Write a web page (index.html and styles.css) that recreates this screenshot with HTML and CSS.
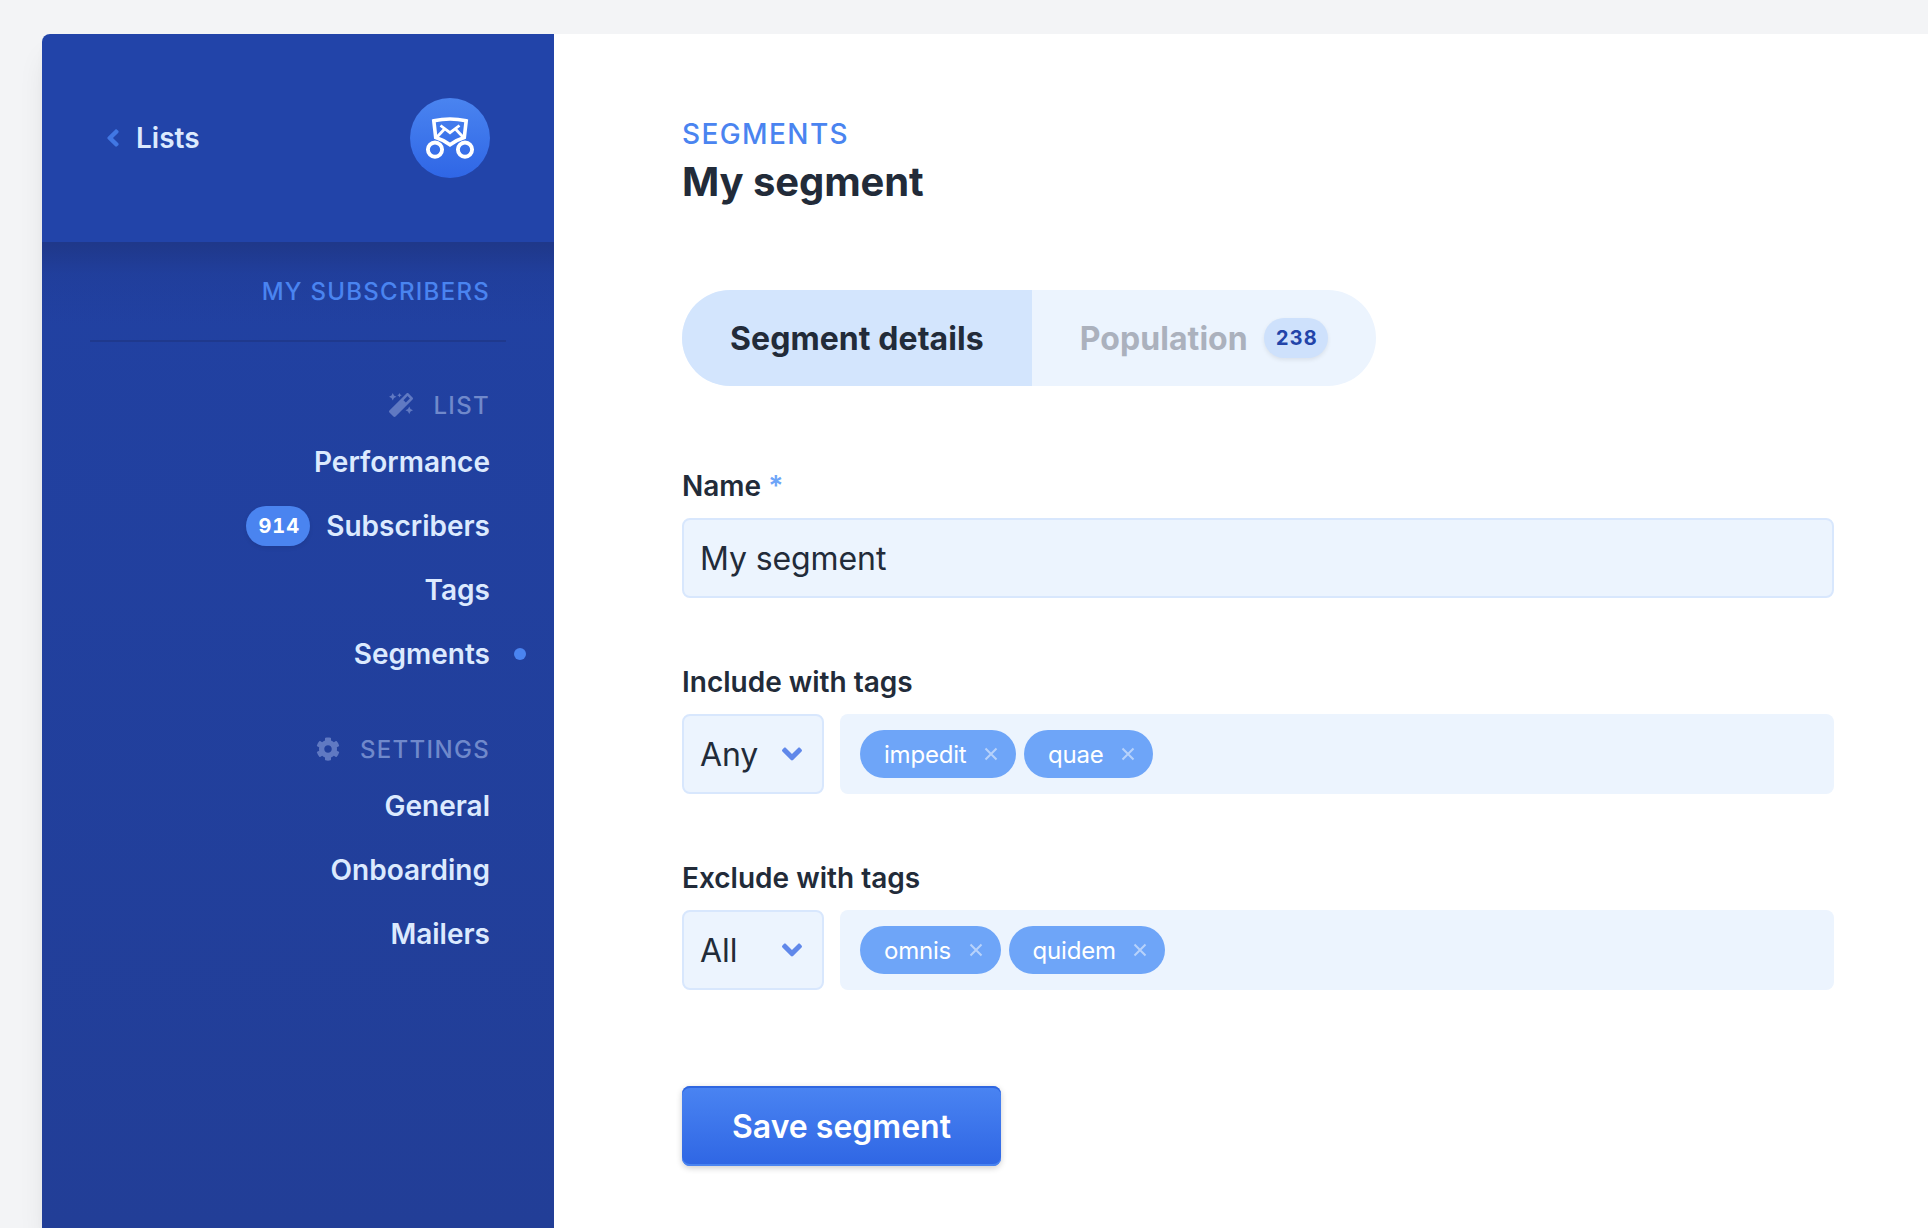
FILE: index.html
```html
<!DOCTYPE html>
<html lang="en">
<head>
<meta charset="utf-8">
<title>My segment</title>
<link rel="stylesheet" href="styles.css">
</head>
<body>
<div class="card">
  <aside class="sidebar">
    <header class="sidebar-header">
      <a class="back">
        <svg class="back-icon" viewBox="0 0 256 512"><path d="M31.7 239l136-136c9.4-9.4 24.6-9.4 33.9 0l22.6 22.6c9.4 9.4 9.4 24.6 0 33.9L127.9 256l96.4 96.4c9.4 9.4 9.4 24.6 0 33.9L201.7 409c-9.4 9.4-24.6 9.4-33.9 0l-136-136c-9.5-9.4-9.5-24.6-.1-34z"/></svg>
        <span>Lists</span>
      </a>
      <div class="logo">
        <svg viewBox="0 0 80 80" fill="none" stroke="#fff" stroke-width="3.600">
          <path d="M23.800 22.800Q40 19.200 56.200 22.800L54.300 39.400Q47 41.500 40 46.800Q33 41.500 25.700 39.400Z"/>
          <path d="M30.500 27.500L40 34.700L49.500 27.500M27 39L35 30.500M53 39L45 30.500" stroke-width="2.800"/>
          <circle cx="25" cy="51.600" r="7.100" stroke-width="3.900"/>
          <circle cx="55" cy="51.600" r="7.100" stroke-width="3.900"/>
        </svg>
      </div>
    </header>
    <nav class="nav">
      <h2 class="nav-title">My subscribers</h2>
      <h3 class="nav-label">
        <svg viewBox="0 0 512 512"><path d="M224 96l16-32 32-16-32-16-16-32-16 32-32 16 32 16 16 32zM80 160l26.660-53.330L160 80l-53.340-26.670L80 0 53.340 53.330 0 80l53.340 26.670L80 160zm352 128l-26.660 53.330L352 368l53.340 26.670L432 448l26.660-53.330L512 368l-53.340-26.670L432 288zm70.620-193.770L417.770 9.380C411.530 3.120 403.340 0 395.150 0c-8.190 0-16.380 3.120-22.630 9.380L9.380 372.520c-12.500 12.500-12.500 32.760 0 45.250l84.850 84.850c6.250 6.250 14.440 9.370 22.620 9.370 8.190 0 16.380-3.120 22.630-9.370l363.140-363.150c12.500-12.480 12.500-32.750 0-45.240zM359.450 203.460l-50.910-50.910 86.600-86.600 50.910 50.910-86.600 86.600z"/></svg>
        <span>List</span>
      </h3>
      <ul class="nav-list">
        <li><a>Performance</a></li>
        <li><span class="badge">914</span><a>Subscribers</a></li>
        <li><a>Tags</a></li>
        <li class="active"><a>Segments</a></li>
      </ul>
      <h3 class="nav-label">
        <svg viewBox="0 0 512 512"><path d="M487.400 315.700l-42.600-24.600c4.300-23.200 4.300-47 0-70.200l42.600-24.600c4.900-2.800 7.100-8.600 5.500-14-11.100-35.600-30-67.800-54.700-94.600-3.800-4.100-10-5.100-14.800-2.300L380.800 110c-17.900-15.400-38.500-27.300-60.800-35.100V25.800c0-5.600-3.900-10.500-9.400-11.700-36.700-8.200-74.300-7.800-109.200 0-5.500 1.200-9.400 6.100-9.400 11.700V75c-22.200 7.900-42.800 19.800-60.800 35.100L88.700 85.500c-4.900-2.800-11-1.900-14.800 2.300-24.700 26.700-43.600 58.900-54.700 94.600-1.700 5.400.6 11.200 5.500 14L67.300 221c-4.300 23.200-4.300 47 0 70.200l-42.600 24.600c-4.900 2.800-7.100 8.600-5.500 14 11.100 35.600 30 67.800 54.700 94.600 3.800 4.100 10 5.100 14.800 2.300l42.600-24.600c17.900 15.400 38.500 27.300 60.800 35.100v49.200c0 5.600 3.900 10.500 9.400 11.700 36.700 8.200 74.300 7.800 109.200 0 5.500-1.200 9.400-6.100 9.400-11.700v-49.200c22.200-7.900 42.800-19.800 60.800-35.100l42.600 24.600c4.900 2.800 11 1.900 14.800-2.300 24.700-26.700 43.600-58.900 54.700-94.600 1.500-5.500-.7-11.300-5.600-14.100zM256 336c-44.100 0-80-35.900-80-80s35.900-80 80-80 80 35.900 80 80-35.900 80-80 80z"/></svg>
        <span>Settings</span>
      </h3>
      <ul class="nav-list">
        <li><a>General</a></li>
        <li><a>Onboarding</a></li>
        <li><a>Mailers</a></li>
      </ul>
    </nav>
  </aside>
  <main class="main">
    <p class="crumb">Segments</p>
    <h1 class="title">My segment</h1>
    <nav class="tabs">
      <a class="tab tab-active">Segment details</a>
      <a class="tab"><span class="tab-text">Population</span><span class="badge badge-light">238</span></a>
    </nav>
    <form class="form">
      <div class="field">
        <label class="label">Name <span class="required">*</span></label>
        <div class="input">My segment</div>
      </div>
      <div class="field">
        <label class="label">Include with tags</label>
        <div class="row">
          <div class="input select"><span>Any</span><svg class="caret" viewBox="0 0 320 512"><path d="M143 352.300L7 216.300c-9.400-9.400-9.400-24.600 0-33.900l22.600-22.600c9.400-9.400 24.600-9.400 33.900 0l96.400 96.400 96.400-96.400c9.400-9.400 24.600-9.400 33.900 0l22.600 22.600c9.400 9.400 9.400 24.600 0 33.900l-136 136c-9.200 9.400-24.400 9.400-33.800 0z"/></svg></div>
          <div class="tags">
            <span class="tag">impedit<svg class="cross" viewBox="0 0 14 14"><path d="M1.500 1.500l11 11M12.500 1.500l-11 11"/></svg></span>
            <span class="tag">quae<svg class="cross" viewBox="0 0 14 14"><path d="M1.500 1.500l11 11M12.500 1.500l-11 11"/></svg></span>
          </div>
        </div>
      </div>
      <div class="field">
        <label class="label">Exclude with tags</label>
        <div class="row">
          <div class="input select"><span>All</span><svg class="caret" viewBox="0 0 320 512"><path d="M143 352.300L7 216.300c-9.400-9.400-9.400-24.600 0-33.900l22.600-22.600c9.400-9.400 24.600-9.400 33.900 0l96.400 96.400 96.400-96.400c9.400-9.400 24.600-9.400 33.900 0l22.600 22.600c9.400 9.400 9.400 24.600 0 33.900l-136 136c-9.200 9.400-24.400 9.400-33.800 0z"/></svg></div>
          <div class="tags">
            <span class="tag">omnis<svg class="cross" viewBox="0 0 14 14"><path d="M1.500 1.500l11 11M12.500 1.500l-11 11"/></svg></span>
            <span class="tag">quidem<svg class="cross" viewBox="0 0 14 14"><path d="M1.500 1.500l11 11M12.500 1.500l-11 11"/></svg></span>
          </div>
        </div>
      </div>
      <button class="button" type="button">Save segment</button>
    </form>
  </main>
</div>
</body>
</html>
```
FILE: styles.css
```css
* { box-sizing: border-box; margin: 0; padding: 0; }

body {
  height: 1228px;
  overflow: hidden;
  padding: 34px 0 0 42px;
  background: #f3f4f6;
  color: #222b39;
  font-family: Inter, sans-serif;
  -webkit-font-smoothing: antialiased;
}

.card {
  display: flex;
  height: 1194px;
  border-radius: 8px 0 0 0;
  background: #fff;
  box-shadow: 0 20px 30px -6px rgba(0, 0, 0, .1), 0 8px 12px -4px rgba(0, 0, 0, .05);
}

.sidebar {
  width: 512px;
  flex: none;
  border-radius: 8px 0 0 0;
  overflow: hidden;
}

.sidebar-header {
  display: flex;
  align-items: center;
  justify-content: space-between;
  height: 208px;
  padding: 0 64px;
  background: #2244a9;
}

.back {
  display: flex;
  align-items: center;
  gap: 16px;
  color: #dceafe;
  font-size: 28px;
  font-weight: 600;
}

.back-icon { width: 14px; height: 28px; fill: #4177e3; }

.logo {
  width: 80px;
  height: 80px;
  border-radius: 50%;
  background: linear-gradient(#4a84f0, #2f66e6);
}

.logo svg { display: block; }

.nav {
  height: 986px;
  padding: 0 64px;
  border-top: 2px solid #1f388a;
  background: linear-gradient(#1f388a, rgba(32, 60, 150, .5) 30px, rgba(32, 60, 150, 0) 80px), linear-gradient(#2141a2, #223e97);
}

.nav-title {
  height: 98px;
  margin: 0 -16px;
  padding: 0 16px;
  border-bottom: 2px solid #1f398d;
  line-height: 95px;
  text-align: right;
  text-transform: uppercase;
  letter-spacing: .053em;
  color: #4a84f0;
  font-size: 24px;
  font-weight: 500;
}

.nav-label {
  display: flex;
  align-items: center;
  justify-content: flex-end;
  gap: 20px;
  height: 50px;
  margin-top: 38px;
  text-transform: uppercase;
  letter-spacing: .055em;
  color: #7089cb;
  font-size: 24px;
  font-weight: 500;
}

.nav-label svg { width: 24px; height: 24px; fill: #6079c2; }

.nav-list { list-style: none; }

.nav-list li {
  position: relative;
  display: flex;
  align-items: center;
  justify-content: flex-end;
  gap: 16px;
  height: 64px;
  color: #dceafe;
  font-size: 28px;
  font-weight: 600;
}

.nav-list .active::after {
  content: "";
  position: absolute;
  right: -36px;
  width: 12px;
  height: 12px;
  border-radius: 50%;
  background: #4a84f0;
}

.badge {
  display: inline-flex;
  align-items: center;
  height: 40px;
  padding: 0 10px 0 12px;
  border-radius: 20px;
  background: #4a84f0;
  color: #fff;
  box-shadow: 0 2px 4px rgba(0, 0, 0, .08);
  font-size: 20px;
  font-weight: 700;
  font-variant-numeric: tabular-nums;
  letter-spacing: .05em;
}

.badge-light { background: #cee1fc; color: #2244a9; }

.main { width: 1280px; flex: none; padding: 82px 0 0 128px; }

.crumb {
  line-height: 36px;
  text-transform: uppercase;
  letter-spacing: .05em;
  color: #4a84f0;
  font-size: 28px;
  font-weight: 500;
}

.title { line-height: 60px; font-size: 40px; font-weight: 700; letter-spacing: -.1px; }

.tabs {
  display: flex;
  width: max-content;
  height: 96px;
  margin-top: 78px;
  border-radius: 48px;
  background: #ecf4fe;
  overflow: hidden;
}

.tab {
  display: flex;
  align-items: center;
  gap: 16px;
  padding: 0 48px;
  font-size: 32px;
  font-weight: 700;
  letter-spacing: .07px;
}

.tab-active { background: #d3e5fd; }
.tab-text { color: #abb1bd; }

.form { margin-top: 84px; }

.field { margin-bottom: 68px; }

.label {
  display: block;
  height: 32px;
  margin-bottom: 16px;
  line-height: 32px;
  font-size: 28px;
  font-weight: 600;
}

.required { color: #6ea5f8; }

.input {
  display: flex;
  align-items: center;
  height: 80px;
  padding: 0 16px;
  border: 2px solid #d8e7fd;
  border-radius: 8px;
  background: #ecf4fe;
  font-size: 32px;
  letter-spacing: -.1px;
}

.row { display: flex; gap: 16px; }

.select { flex: none; justify-content: space-between; width: 142px; padding-right: 20px; }

.caret { width: 20px; height: 32px; }
.caret path { fill: #6088ea; }

.tags {
  display: flex;
  flex: 1;
  align-items: center;
  gap: 8px;
  padding: 0 20px;
  border-radius: 8px;
  background: #ecf4fe;
}

.tag {
  display: flex;
  align-items: center;
  gap: 17.5px;
  height: 48px;
  padding: 0 18px 0 24px;
  border-radius: 24px;
  background: #6ea5f8;
  color: #fff;
  font-size: 24px;
  letter-spacing: -.2px;
}

.cross { width: 14px; height: 14px; fill: none; stroke: #b7d2fb; stroke-width: 2; }

.button {
  display: block;
  height: 80px;
  margin-top: 96px;
  padding: 0 50px;
  border: 0;
  border-radius: 8px;
  background: linear-gradient(#4a84f2, #2f66e4);
  box-shadow: inset 0 2px #2f66e0, inset 0 -2px #4a84f0, 0 2px 6px rgba(0, 0, 0, .2);
  color: #fff;
  font-family: inherit;
  font-size: 32px;
  font-weight: 600;
}
```
